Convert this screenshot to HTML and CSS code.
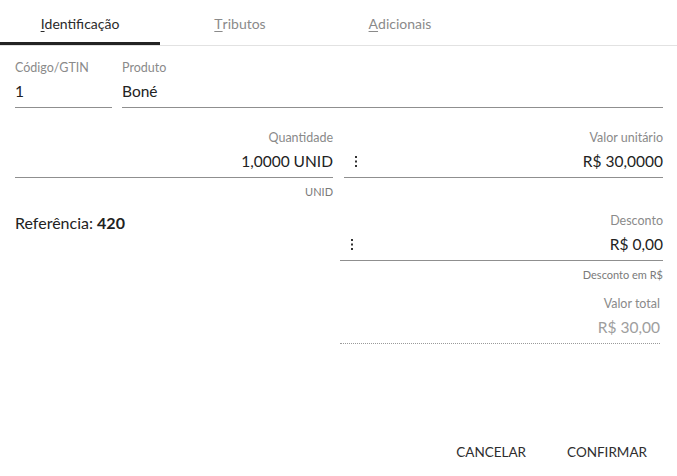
FILE: index.html
```html
<!DOCTYPE html>
<html lang="pt-BR">
<head>
<meta charset="utf-8">
<title>Item</title>
<link rel="stylesheet" href="styles.css">
</head>
<body>
<div class="dialog">
  <nav class="tabs">
    <div class="tab active"><u>I</u>dentificação</div>
    <div class="tab"><u>T</u>ributos</div>
    <div class="tab"><u>A</u>dicionais</div>
  </nav>

  <div class="form">
    <div class="row-top">
      <div class="field code">
        <span class="label">Código/GTIN</span>
        <span class="value">1</span>
      </div>
      <div class="field product">
        <span class="label">Produto</span>
        <span class="value">Boné</span>
      </div>
    </div>

    <div class="cols">
      <div class="col">
        <div class="group">
          <div class="field right">
            <span class="label">Quantidade</span>
            <span class="value">1,0000 UNID</span>
          </div>
          <div class="helper">UNID</div>
        </div>
        <div class="reference">Referência: <b>420</b></div>
      </div>

      <div class="col">
        <div class="group unit">
          <div class="field right">
            <span class="label">Valor unitário</span>
            <div class="value-row">
              <svg class="more" width="4" height="11" viewBox="0 0 4 11"><rect x="1" y="0" width="2" height="2"/><rect x="1" y="4.5" width="2" height="2"/><rect x="1" y="9" width="2" height="2"/></svg>
              <span class="value">R$ 30,0000</span>
            </div>
          </div>
          <div class="helper"></div>
        </div>
        <div class="group">
          <div class="field right">
            <span class="label">Desconto</span>
            <div class="value-row">
              <svg class="more" width="4" height="11" viewBox="0 0 4 11"><rect x="1" y="0" width="2" height="2"/><rect x="1" y="4.5" width="2" height="2"/><rect x="1" y="9" width="2" height="2"/></svg>
              <span class="value">R$ 0,00</span>
            </div>
          </div>
          <div class="helper">Desconto em R$</div>
        </div>
        <div class="group">
          <div class="field right disabled">
            <span class="label">Valor total</span>
            <span class="value">R$ 30,00</span>
          </div>
        </div>
      </div>
    </div>
  </div>

  <div class="actions">
    <button class="btn">Cancelar</button>
    <button class="btn">Confirmar</button>
  </div>
</div>
</body>
</html>
```

FILE: styles.css
```css
* { box-sizing: border-box; }
html, body { margin: 0; padding: 0; background: #fff; }
body {
  font-family: "Lato", "Open Sans", sans-serif;
  color: #222;
}
.dialog {
  display: flex;
  flex-direction: column;
  height: 476px;
}
.tabs {
  display: flex;
  border-bottom: 1px solid #e2e2e2;
  height: 46px;
}
.tab {
  width: 160px;
  height: 45px;
  display: flex;
  align-items: center;
  justify-content: center;
  font-size: 14px;
  color: #8a8a8a;
  padding-top: 1px;
}
.tab.active {
  color: #2a2a2a;
  border-bottom: 3px solid #232323;
  padding-top: 4px;
}
.tab u { text-underline-offset: 2px; }

.form {
  padding: 0 14px 0 15px;
}
.row-top {
  display: flex;
  gap: 10px;
  margin-top: 15px;
}
.field {
  display: flex;
  flex-direction: column;
  border-bottom: 1px solid #8f8f8f;
  padding-bottom: 5px;
}
.field.code { width: 97px; }
.field.product { flex: 1; }
.label {
  font-size: 12.5px;
  line-height: 14px;
  color: #8a8a8a;
}
.value {
  font-size: 15.5px;
  line-height: 22px;
  margin-top: 5px;
  color: #222;
}
.field.right { align-items: stretch; text-align: right; }
.value-row {
  display: flex;
  align-items: center;
  justify-content: space-between;
  padding-left: 10px;
}
.value-row .value { margin-top: 5px; }
.more { fill: #333; margin-top: 6px; }
.field.disabled { border-bottom: 1px dotted #9a9a9a; margin-right: 3px; }
.field.disabled .value { color: #9e9e9e; }

.cols {
  display: grid;
  grid-template-columns: 318px 1fr;
  gap: 7px;
  margin-top: 23px;
}
.col { display: flex; flex-direction: column; gap: 15px; }
.group { display: flex; flex-direction: column; }
.group.unit { margin-left: 4px; }
.helper {
  font-size: 11px;
  line-height: 14px;
  height: 14px;
  color: #7a7a7a;
  text-align: right;
  margin-top: 7px;
}
.reference {
  font-size: 16px;
  line-height: 18px;
  color: #222;
}
.reference b { font-weight: 700; }

.actions {
  margin-top: auto;
  display: flex;
  justify-content: flex-end;
  gap: 25px;
  padding: 0 22px 6px 0;
}
.btn {
  background: none;
  border: 0;
  font-family: "Lato", sans-serif;
  font-size: 13.5px;
  text-transform: uppercase;
  color: #2e2e2e;
  height: 36px;
  padding: 0 8px;
}
```
